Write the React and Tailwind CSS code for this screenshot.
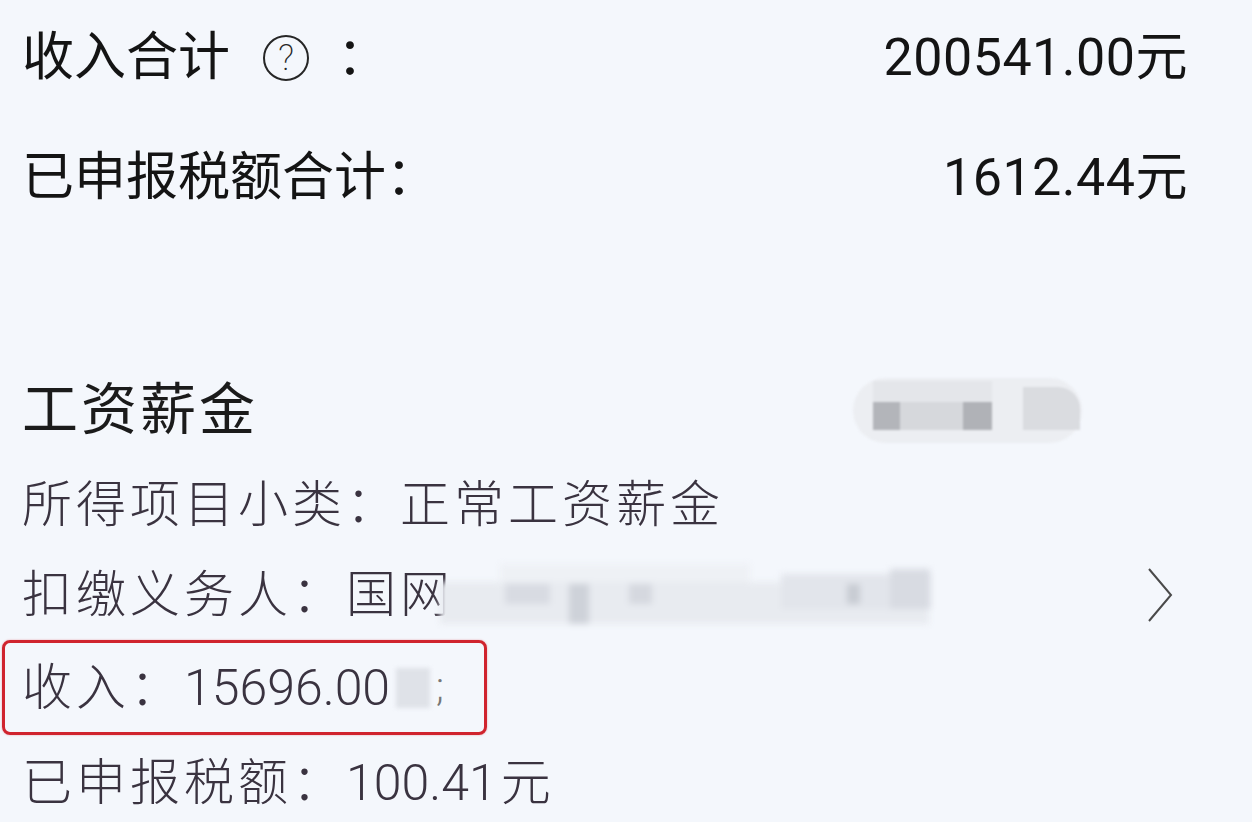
import React from "react";

const FONT = "font-['Roboto','Noto_Sans_CJK_SC',sans-serif]";

function Num({ children }) {
  return <span className="text-[50px] tracking-[0px]">{children}</span>;
}

export default function App() {
  return (
    <div className={`w-[1252px] h-[822px] overflow-hidden bg-[#f4f7fc] ${FONT}`}>
      {/* Summary rows */}
      <div className="flex h-[116px] items-center justify-between pl-[22px] pr-[64px] text-[52px] font-normal leading-none text-[#141414]">
        <div className="flex items-center">
          <span>收入合计</span>
          <span className="ml-[33px] flex h-[46px] w-[46px] items-center justify-center rounded-full border-[2px] border-[#262626] text-[36px] font-extralight text-[#262626]">
            ?
          </span>
          <span className="ml-[28px]">：</span>
        </div>
        <span className="tracking-[0.5px]">200541.00元</span>
      </div>
      <div className="flex h-[124px] items-center justify-between pl-[22px] pr-[64px] text-[52px] font-normal leading-none text-[#141414]">
        <span>已申报税额合计：</span>
        <span className="tracking-[0.5px]">1612.44元</span>
      </div>

      <div className="h-[120px]" />

      {/* Section title */}
      <div className="flex h-[100px] items-center justify-between pl-[22px] pr-[170px]">
        <span className="text-[56px] font-normal leading-none tracking-[3px] text-[#1b1b1b]">工资薪金</span>
        <div className="relative h-[65px] w-[229px] rounded-full bg-[#eceef2] blur-[1px]">
          <div className="absolute left-[20px] top-[3px] h-[21px] w-[119px] bg-[#e4e6ea]" />
          <div className="absolute left-[20px] top-[24px] flex h-[28px] w-[119px] bg-[#d6d8dc]">
            <div className="h-full w-[27px] bg-[#b3b5ba]" />
            <div className="flex-1" />
            <div className="h-full w-[29px] bg-[#b0b2b7]" />
          </div>
          <div className="absolute left-[170px] top-[9px] h-[43px] w-[57px] rounded-tr-[22px] bg-[#dadce0]" />
        </div>
      </div>

      {/* Detail rows */}
      <div className="flex flex-col text-[50px] font-light leading-none tracking-[4px] text-[#3a3340]">
        <div className="flex h-[90px] items-center pl-[22px]">所得项目小类：正常工资薪金</div>
        <div className="flex h-[90px] items-center justify-between pl-[22px] pr-[78px]">
          <div className="flex items-center">
            <span>扣缴义务人：国网</span>
            <div className="relative -ml-[14px] h-[62px] w-[490px] blur-[3px]">
              <div className="absolute left-[60px] top-0 h-[20px] w-[250px] bg-[#eef1f5]" />
              <div className="absolute left-0 top-[18px] h-[42px] w-[489px] bg-[#e8ebf0]" />
              <div className="absolute left-[65px] top-[20px] h-[20px] w-[45px] bg-[#d8dbe2]" />
              <div className="absolute left-[129px] top-[20px] h-[40px] w-[20px] bg-[#ced2d9]" />
              <div className="absolute left-[189px] top-[20px] h-[20px] w-[23px] bg-[#d5d8df]" />
              <div className="absolute left-[341px] top-[10px] h-[35px] w-[150px] bg-[#e2e5eb]" />
              <div className="absolute left-[407px] top-[20px] h-[20px] w-[13px] bg-[#c8ccd3]" />
              <div className="absolute left-[450px] top-[5px] h-[40px] w-[40px] bg-[#d8dbe2]" />
            </div>
          </div>
          <svg width="28" height="56" viewBox="0 0 28 56" fill="none">
            <polyline points="3,2 25,28 3,54" stroke="#4a4a4a" strokeWidth="2" />
          </svg>
        </div>
        <div className="ml-[2px] flex h-[95px] w-[485px] items-center rounded-[8px] border-[3px] border-[#d0242e] pl-[17px] shadow-[0_0_2px_rgba(208,36,46,0.4)]">
          <span>收入：</span>
          <Num>15696.00</Num>
          <span className="ml-[6px] h-[40px] w-[34px] bg-[#dfe2e8] blur-[2px]" />
          <span className="ml-[6px] text-[40px] text-[#777]">;</span>
        </div>
        <div className="flex h-[87px] items-center pl-[22px] pt-[8px]">
          <span>已申报税额：</span>
          <Num>100.41</Num>
          <span className="ml-[4px]">元</span>
        </div>
      </div>
    </div>
  );
}
